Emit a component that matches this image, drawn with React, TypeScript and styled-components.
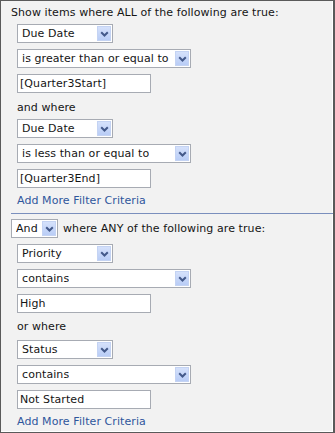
import * as React from 'react';
import styled, { createGlobalStyle } from 'styled-components';

const GlobalStyle = createGlobalStyle`
  html, body {
    margin: 0;
    padding: 0;
    background: #ffffff;
  }
  * {
    box-sizing: border-box;
  }
`;

const Panel = styled.div`
  width: 335px;
  height: 433px;
  background: #f2f2f2;
  border: 1px solid #5a5a5a;
  border-right-width: 2px;
  box-shadow: inset -1px -1px 0 #ffffff;
  font-family: 'DejaVu Sans', Verdana, sans-serif;
  font-size: 11px;
  letter-spacing: 0.08px;
  color: #151515;
  display: flex;
  flex-direction: column;
`;

const Section = styled.div`
  display: flex;
  flex-direction: column;
  padding-left: 16px;
`;

const Caption = styled.div<{ top?: number; indent?: number }>`
  line-height: 14px;
  height: 14px;
  white-space: nowrap;
  margin-top: ${(props) => props.top || 0}px;
  margin-left: ${(props) => props.indent || 0}px;
`;

const Stack = styled.div<{ top: number }>`
  display: flex;
  flex-direction: column;
  align-items: flex-start;
  gap: 6px;
  margin-top: ${(props) => props.top}px;
`;

const Dropdown = styled.div<{ width: number }>`
  width: ${(props) => props.width}px;
  height: 19px;
  background: #ffffff;
  border: 1px solid #a7abb3;
  padding: 1px 1px 1px 4px;
  display: flex;
  align-items: center;
  justify-content: space-between;
  flex-shrink: 0;
`;

const DropdownText = styled.span`
  line-height: 15px;
  white-space: nowrap;
  overflow: hidden;
`;

const ArrowButton = styled.span`
  width: 14px;
  height: 15px;
  flex-shrink: 0;
  background: linear-gradient(#d5e1fb, #b9cdf6);
  border: 1px solid #c4d3f3;
  display: flex;
  align-items: center;
  justify-content: center;
`;

const TextBox = styled.div`
  width: 134px;
  height: 19px;
  background: #ffffff;
  border: 1px solid #a7abb3;
  padding: 0 2px;
  line-height: 17px;
  white-space: nowrap;
`;

const Link = styled.a`
  display: block;
  line-height: 14px;
  height: 14px;
  margin-top: 6px;
  color: #2f569c;
  text-decoration: none;
  white-space: nowrap;
`;

const Divider = styled.div`
  height: 1px;
  margin: 5px 0 0 10px;
  background: #7a8fbd;
`;

const JoinRow = styled.div`
  display: flex;
  align-items: center;
  gap: 5px;
  margin: 5px 0 0 10px;
`;

const Chevron = () => (
  <svg width="9" height="6" viewBox="0 0 9 6">
    <path d="M1.2 1.2 L4.5 4.5 L7.8 1.2" fill="none" stroke="#43598a" strokeWidth="2" />
  </svg>
);

const Select = ({ width, value }: { width: number; value: string }) => (
  <Dropdown width={width}>
    <DropdownText>{value}</DropdownText>
    <ArrowButton>
      <Chevron />
    </ArrowButton>
  </Dropdown>
);

type Criterion = { field: string; operator: string; value: string };

const CriterionGroup = ({ item, top }: { item: Criterion; top: number }) => (
  <Stack top={top}>
    <Select width={96} value={item.field} />
    <Select width={174} value={item.operator} />
    <TextBox>{item.value}</TextBox>
  </Stack>
);

export default function App() {
  return (
    <>
      <GlobalStyle />
      <Panel>
        <Caption top={5} indent={10}>
          Show items where ALL of the following are true:
        </Caption>
        <Section>
          <CriterionGroup
            top={4}
            item={{ field: 'Due Date', operator: 'is greater than or equal to', value: '[Quarter3Start]' }}
          />
          <Caption top={8}>and where</Caption>
          <CriterionGroup
            top={4}
            item={{ field: 'Due Date', operator: 'is less than or equal to', value: '[Quarter3End]' }}
          />
          <Link href="#">Add More Filter Criteria</Link>
        </Section>
        <Divider />
        <JoinRow>
          <Select width={47} value="And" />
          <span>where ANY of the following are true:</span>
        </JoinRow>
        <Section>
          <CriterionGroup
            top={6}
            item={{ field: 'Priority', operator: 'contains', value: 'High' }}
          />
          <Caption top={7}>or where</Caption>
          <CriterionGroup
            top={6}
            item={{ field: 'Status', operator: 'contains', value: 'Not Started' }}
          />
          <Link href="#">Add More Filter Criteria</Link>
        </Section>
      </Panel>
    </>
  );
}
